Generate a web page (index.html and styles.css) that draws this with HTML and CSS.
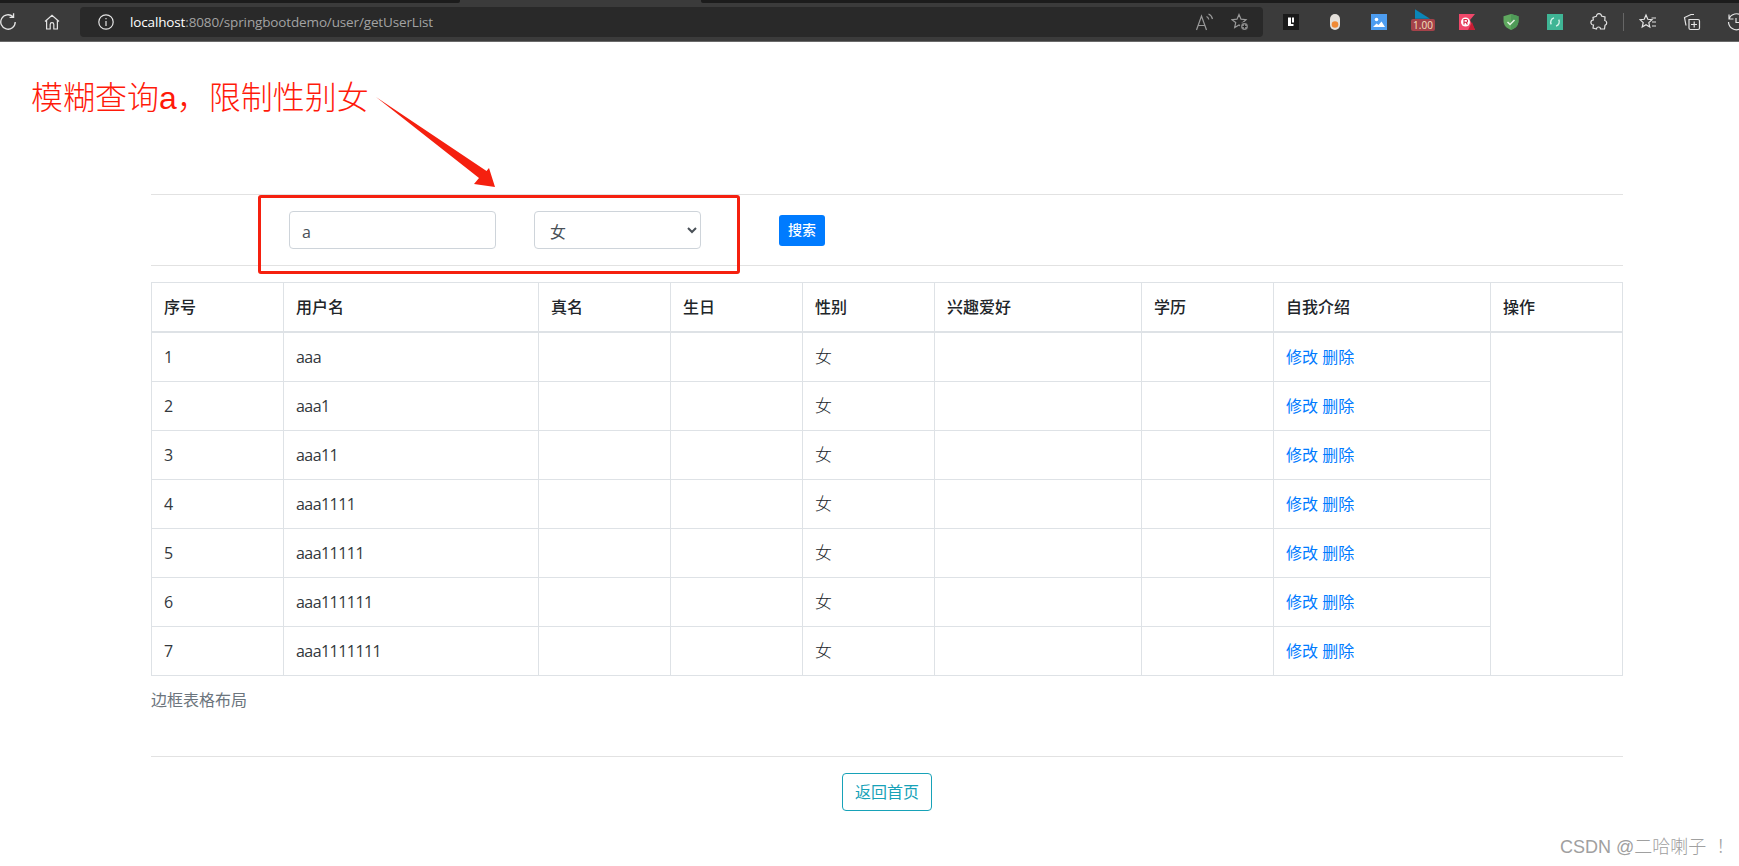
FILE: index.html
```html
<!DOCTYPE html>
<html lang="zh-CN">
<head>
<meta charset="utf-8">
<title>用户列表</title>
<link rel="stylesheet" href="styles.css">
</head>
<body>
<header class="browser">
  <div class="tabstrip"><div class="tab tab-a"></div><div class="tab tab-b"></div></div>
  <div class="toolbar">
    <span class="slot slot-first">
      <svg class="ico ico-lg" viewBox="0 0 18 18"><path d="M15.5 9a6.5 6.5 0 1 1-2-4.7M14 1.2v3.6h-3.6" /></svg>
    </span>
    <span class="slot">
      <svg class="ico" viewBox="0 0 18 18"><path d="M2 8.5 9 2.200l7 6.300M3.600 7.400V16h3.600v-4.600a1.800 1.800 0 0 1 3.600 0V16h3.600V7.400" /></svg>
    </span>
    <div class="address">
      <svg class="ico info" viewBox="0 0 18 18"><circle cx="9" cy="9" r="7.200"/><path d="M9 8v5M9 5v1.200"/></svg>
      <span class="url"><span class="host">localhost</span>:8080/springbootdemo/user/getUserList</span>
      <div class="address-end">
        <svg class="ico dim aloud" viewBox="0 0 18 18"><path d="M0.500 17 5.500 3l5 14M2.200 12.500h6.600M10.500 3.500c1.300.5 2 1.500 2.300 3M12.500 1c2.300.8 3.500 2.800 4 5"/></svg>
        <svg class="ico dim star-add" viewBox="0 0 18 18"><path d="M8 1.500l2 4.700 5 .5-3.800 3.300 1 5L8 12l-4.300 2.500 1-5L1 6.700l5-.5z"/><circle class="disc" cx="13.500" cy="13.500" r="4"/><path class="plus" d="M13.500 11.500v4M11.500 13.500h4"/></svg>
      </div>
    </div>
    <div class="extensions">
      <span class="slot"><svg class="ext" viewBox="0 0 16 16"><rect width="16" height="16" fill="#1a1a1a"/><path d="M5 3.500h3v6.500h2.500v2H5z" fill="#fff"/><path d="M9 3.500h2v5H9z" fill="#fff"/></svg></span>
      <span class="slot"><svg class="ext" viewBox="0 0 16 16"><rect x="3" y="0" width="10" height="16" rx="5" fill="#e4e0da"/><circle cx="8" cy="10.500" r="3.300" fill="#f08a35"/></svg></span>
      <span class="slot"><svg class="ext" viewBox="0 0 16 16"><rect width="16" height="16" fill="#4d9df0"/><circle cx="5.500" cy="5.500" r="1.800" fill="#fff"/><path d="M2 13l3.500-3.500 2 1.500L10.500 7.500 14 13z" fill="#fff"/></svg></span>
      <span class="slot slot-badge">
        <svg class="flag" viewBox="0 0 14 9"><path d="M0 0l14 9H0z" fill="#0a86b8"/></svg>
        <span class="badge">1.00</span>
      </span>
      <span class="slot"><svg class="ext" viewBox="0 0 16 16"><path d="M0 0h16l-5 6 5 10H0z" fill="#f0486a"/><path d="M9 16l4-8 3 8z" fill="#c81e34"/><circle cx="6.500" cy="8" r="4.500" fill="#fff"/><path d="M5 10.500v-5h2.200a1.400 1.400 0 0 1 0 2.800H5M7 8.300l1.400 2.200" fill="none" stroke="#d8203f" stroke-width="1.100"/></svg></span>
      <span class="slot"><svg class="ext" viewBox="0 0 16 16"><path d="M8 0l7.500 2.300V7C15.500 11.500 12 14.500 8 16 4 14.500.500 11.500.500 7V2.300z" fill="#5fa85f"/><path d="M8 0l7.500 2.300V7C15.500 11.500 12 14.500 8 16z" fill="#4f9a58"/><path d="M4.500 8l2.500 2.500 4.500-4.500" fill="none" stroke="#e4f3e4" stroke-width="1.500"/></svg></span>
      <span class="slot"><svg class="ext" viewBox="0 0 16 16"><rect width="16" height="16" fill="#3fb595"/><path d="M4.300 10.300A4.300 4.300 0 0 1 7 3.900M11.700 5.700A4.300 4.300 0 0 1 9 12.100" fill="none" stroke="#d5f3ea" stroke-width="1.400"/></svg></span>
      <span class="slot"><svg class="ico" viewBox="0 0 18 18"><path d="M6.500 3.200a2.500 2.500 0 0 1 5-.2l3.500 1-.2 3.500a2.500 2.500 0 0 1 .2 4.800l-.5 3.700h-4a2 2 0 0 0-4 0L3 15l.5-3a2.500 2.500 0 0 1-.2-5L3 4.500z"/></svg></span>
      <span class="sep"></span>
      <span class="slot slot-tight"><svg class="ico" viewBox="0 0 18 18"><path d="M7 2l1.800 4.300 4.200.4-3.200 2.900 1 4.400L7 11.700 3.200 14l1-4.400L1 6.700l4.200-.4zM12.500 5H17M13 9h4M13 13h4"/></svg></span>
      <span class="slot"><svg class="ico" viewBox="0 0 18 18"><path d="M3 12.500 1.500 4.500 8 1.500h3M6 6.500h9a1.500 1.500 0 0 1 1.500 1.500v7A1.500 1.500 0 0 1 15 16.500H7.500A1.500 1.500 0 0 1 6 15zM11.200 8.500v6M8 11.500h6"/></svg></span>
      <span class="slot"><svg class="ico" viewBox="0 0 18 18"><path d="M2 6a8 8 0 1 1-.5 3M2 1.500V6h4.500M9 5v4.500h3"/></svg></span>
    </div>
  </div>
</header>

<main class="page">
  <hr class="rule">
  <form class="search">
    <input class="field field-text" type="text" value="a">
    <select class="field field-select"><option>女</option></select>
    <button class="btn-search" type="button">搜索</button>
  </form>
  <hr class="rule">
  <table class="users">
    <colgroup>
      <col class="c-id"><col class="c-name"><col class="c-real"><col class="c-birth"><col class="c-sex"><col class="c-hobby"><col class="c-edu"><col class="c-intro"><col class="c-op">
    </colgroup>
    <thead>
      <tr><th>序号</th><th>用户名</th><th>真名</th><th>生日</th><th>性别</th><th>兴趣爱好</th><th>学历</th><th>自我介绍</th><th>操作</th></tr>
    </thead>
    <tbody>
      <tr><td class="latin">1</td><td class="latin">aaa</td><td></td><td></td><td class="thin">女</td><td></td><td></td><td><a href="#">修改</a> <a href="#">删除</a></td><td rowspan="7"></td></tr>
      <tr><td class="latin">2</td><td class="latin">aaa1</td><td></td><td></td><td class="thin">女</td><td></td><td></td><td><a href="#">修改</a> <a href="#">删除</a></td></tr>
      <tr><td class="latin">3</td><td class="latin">aaa11</td><td></td><td></td><td class="thin">女</td><td></td><td></td><td><a href="#">修改</a> <a href="#">删除</a></td></tr>
      <tr><td class="latin">4</td><td class="latin">aaa1111</td><td></td><td></td><td class="thin">女</td><td></td><td></td><td><a href="#">修改</a> <a href="#">删除</a></td></tr>
      <tr><td class="latin">5</td><td class="latin">aaa11111</td><td></td><td></td><td class="thin">女</td><td></td><td></td><td><a href="#">修改</a> <a href="#">删除</a></td></tr>
      <tr><td class="latin">6</td><td class="latin">aaa111111</td><td></td><td></td><td class="thin">女</td><td></td><td></td><td><a href="#">修改</a> <a href="#">删除</a></td></tr>
      <tr><td class="latin">7</td><td class="latin">aaa1111111</td><td></td><td></td><td class="thin">女</td><td></td><td></td><td><a href="#">修改</a> <a href="#">删除</a></td></tr>
    </tbody>
  </table>
  <p class="caption">边框表格布局</p>
  <hr class="rule rule-foot">
  <div class="back"><a class="btn-back" href="#">返回首页</a></div>
</main>

<div class="note">模糊查询a，限制性别女</div>
<svg class="arrow" viewBox="0 0 130 100"><path d="M0 0 L110.500 74 L113 71 L119 90 L98 87 L103 81 Z" /></svg>
<div class="redbox"></div>
<div class="watermark">CSDN @二哈喇子<span class="bang">！</span></div>
</body>
</html>
```

FILE: styles.css
```css
* { box-sizing: border-box; }
html, body { margin: 0; padding: 0; }
body {
  height: 866px;
  overflow: hidden;
  background: #fff;
  color: #212529;
  font-family: "Open Sans", "Noto Sans CJK SC", sans-serif;
  font-size: 16px;
  line-height: 24px;
}

/* browser chrome */
.browser { height: 42px; background: #3b3b3b; border-bottom: 1px solid #6a6a6a; overflow: hidden; }
.tabstrip { height: 3px; background: #3b3b3b; display: flex; }
.tab { height: 3px; background: #1c1c1c; }
.tab-a { width: 460px; border-bottom-right-radius: 2px; }
.tab-b { flex: 1; margin-left: 241px; border-bottom-left-radius: 2px; }
.toolbar { height: 37px; display: flex; align-items: center; margin-left: -14px; }
.slot { width: 44px; height: 30px; flex: none; display: flex; align-items: center; justify-content: center; position: relative; }
.ico { width: 18px; height: 18px; fill: none; stroke: #e4e4e4; stroke-width: 1.2; flex: none; }
.ico-lg { width: 20px; height: 20px; }
.ico.dim { stroke: #9a9a9a; }
.ico .disc { fill: #8a8a8a; stroke: #292929; }
.ico .plus { stroke: #222; }
.address {
  width: 1183px;
  margin-left: 6px;
  height: 30px;
  background: #292929;
  border-radius: 4px;
  display: flex;
  align-items: center;
  padding: 0 14px 0 17px;
  flex: none;
}
.url { margin-left: 15px; color: #a3a3a3; font-family: "Open Sans", sans-serif; font-size: 13.5px; letter-spacing: -0.14px; white-space: nowrap; }
.host { color: #fff; }
.address-end { margin-left: auto; display: flex; gap: 17px; align-items: center; }
.extensions { display: flex; align-items: center; margin-left: 6px; flex: none; }
.ext { width: 16px; height: 16px; display: block; }
.slot-badge { height: 36px; }
.flag { position: absolute; top: 5px; left: 14px; width: 15px; height: 10px; }
.badge {
  position: absolute;
  top: 15px;
  left: 10px;
  width: 24px;
  height: 12px;
  background: #a5424a;
  border-radius: 2px;
  color: #f4e3c0;
  font-family: "Open Sans", sans-serif;
  font-size: 10px;
  line-height: 12px;
  text-align: center;
}
.sep { width: 1px; height: 18px; background: #666; flex: none; margin-left: 2px; margin-right: -1px; }
.slot-tight { margin-left: 3px; }

/* page */
.page { width: 1472px; margin: 0 auto 0 151px; padding-top: 152px; }
.rule { margin: 0; border: 0; border-top: 1px solid #e2e2e2; }
.search { height: 70px; display: flex; align-items: center; padding-left: 138px; }
.field {
  height: 38px;
  border: 1px solid #ced4da;
  border-radius: 4px;
  background: #fff;
  color: #495057;
  font-family: "Open Sans", "Noto Sans CJK SC", sans-serif;
  font-size: 16px;
  padding: 8px 12px 4px;
}
.field-text { width: 207px; }
.field-select { width: 167px; margin-left: 38px; padding-left: 11px; }
.btn-search {
  width: 46px;
  height: 31px;
  margin-left: 78px;
  padding: 0 0 2px;
  border: 0;
  border-radius: 3px;
  background: #007bff;
  color: #fff;
  font-family: "Noto Sans CJK SC", sans-serif;
  font-size: 14px;
  font-weight: 500;
}
.users { width: 1471px; margin-top: 16px; border-collapse: collapse; table-layout: fixed; }
.c-id { width: 132px; }
.c-name { width: 255px; }
.c-real, .c-birth, .c-sex, .c-edu, .c-op { width: 132px; }
.c-hobby { width: 207px; }
.c-intro { width: 217px; }
.users th, .users td { border: 1px solid #dee2e6; padding: 12px; text-align: left; vertical-align: top; }
.users th { border-bottom-width: 2px; font-weight: 500; }
.users .latin { letter-spacing: -0.55px; color: #33383d; }
.users .thin { font-weight: 300; font-size: 17px; }
.users a { color: #007bff; text-decoration: none; }
.caption { margin: 0; padding-top: 12px; color: #6c757d; }
.rule-foot { margin-top: 44px; }
.back { display: flex; justify-content: center; padding-top: 16px; }
.btn-back {
  height: 38px;
  padding: 6px 12px;
  border: 1px solid #17a2b8;
  border-radius: 4px;
  color: #17a2b8;
  text-decoration: none;
}

/* annotations laid over the page */
.note {
  position: absolute;
  left: 31px;
  top: 76px;
  color: #ff1a0a;
  font-family: "Liberation Sans", "Noto Sans CJK SC", sans-serif;
  font-size: 32px;
  font-weight: 300;
  line-height: 44px;
  white-space: nowrap;
}
.arrow { position: absolute; left: 376px; top: 97px; width: 130px; height: 100px; fill: #f5200f; }
.redbox { position: absolute; left: 258px; top: 195px; width: 482px; height: 79px; border: 3px solid #f5200f; border-radius: 3px; }
.watermark {
  position: absolute;
  left: 1560px;
  top: 835px;
  color: #a0a0a0;
  font-family: "Liberation Sans", "Noto Sans CJK SC", sans-serif;
  font-size: 18px;
  font-weight: 300;
  line-height: 24px;
  white-space: nowrap;
}
.bang { margin-left: 10px; }
```
